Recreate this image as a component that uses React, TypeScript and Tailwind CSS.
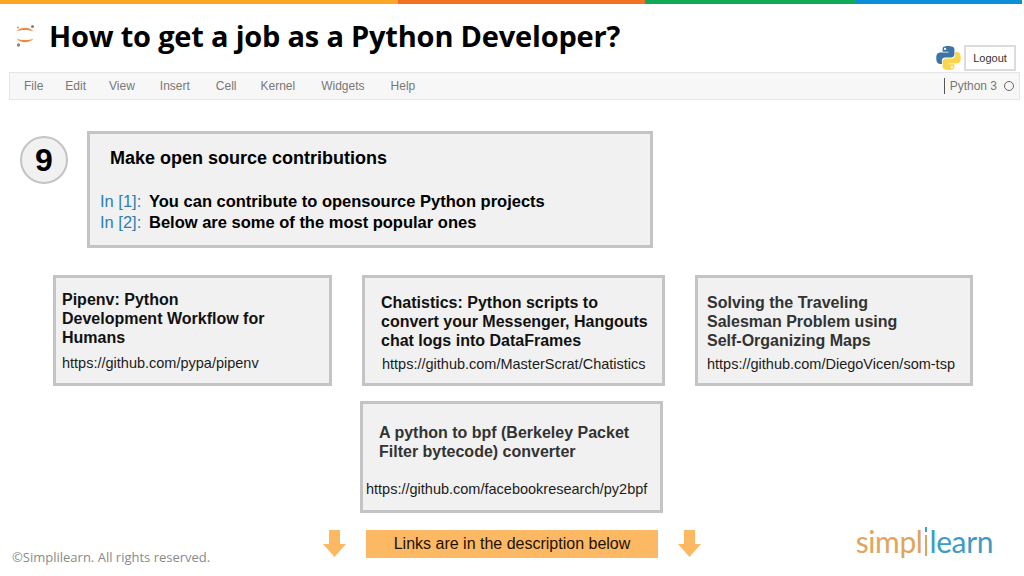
import React from 'react';

const menu = ['File', 'Edit', 'View', 'Insert', 'Cell', 'Kernel', 'Widgets', 'Help'];
const menuGaps = ['w-[22px]', 'w-[23px]', 'w-[25px]', 'w-[26px]', 'w-[24px]', 'w-[26px]', 'w-[26px]', 'w-[0px]'];

const JupyterMark = () => (
  <svg width="24" height="28" viewBox="0 0 24 28" className="shrink-0">
    <path d="M3.5 10.5C7 5.5 17 5.5 20.5 10.5C16.5 8.5 7.5 8.5 3.5 10.5Z" fill="#f08a3c" />
    <path d="M3.5 17.5C7 22.5 17 22.5 20.5 17.5C16.5 19.5 7.5 19.5 3.5 17.5Z" fill="#f08a3c" />
    <circle cx="19.5" cy="5.5" r="1.5" fill="#7a7f85" />
    <circle cx="5" cy="6.5" r="1" fill="#9a9ea3" />
    <circle cx="5.5" cy="24" r="1.7" fill="#83878c" />
  </svg>
);

const PythonMark = () => (
  <svg width="25" height="26" viewBox="0 0 110 110" className="shrink-0">
    <path
      d="M54 2C27 2 29 14 29 14V27H55V31H18S1 29 1 55 16 81 16 81H26V68S25 53 41 53H67S81 53 81 39V16S83 2 54 2ZM40 10A5 5 0 1 1 40 20 5 5 0 0 1 40 10Z"
      fill="#3c74a6"
    />
    <path
      d="M56 108C83 108 81 96 81 96V83H55V79H92S109 81 109 55 94 29 94 29H84V42S85 57 69 57H43S29 57 29 71V94S27 108 56 108ZM70 100A5 5 0 1 1 70 90 5 5 0 0 1 70 100Z"
      fill="#fbd54a"
    />
  </svg>
);

const DownArrow = () => (
  <svg width="23" height="27" viewBox="0 0 23 27" className="shrink-0">
    <path d="M6 0H17V14H23L11.5 27L0 14H6Z" fill="#fdb863" />
  </svg>
);

const SimplilearnLogo = () => (
  <div className="relative flex items-baseline text-[30px] leading-none font-['Lato',sans-serif] font-normal tracking-[-0.4px]">
    <span className="text-[#e0a55c]">simpl</span>
    <span className="relative w-[5px] mx-[1px] self-stretch">
      <span className="absolute left-[1px] top-[1px] w-[2px] h-[5px] bg-[#3f9cc4]" />
      <span className="absolute left-[1px] top-[9px] w-[2px] h-[21px] bg-[#e0a55c]" />
    </span>
    <span className="text-[#3f9cc4]">learn</span>
  </div>
);

type CardProps = {
  title: string[];
  url: string;
  className: string;
  titleClass: string;
  urlClass: string;
};

const Card = ({ title, url, className, titleClass, urlClass }: CardProps) => (
  <div className={`bg-[#f1f1f1] border-[3px] border-[#c4c4c4] ${className}`}>
    <div className={`font-bold text-[16px] leading-[19px] ${titleClass}`}>
      {title.map((line) => (
        <div key={line} className="whitespace-nowrap">{line}</div>
      ))}
    </div>
    <div className={`text-[14.5px] leading-[18px] whitespace-nowrap text-[#1c1c1c] ${urlClass}`}>{url}</div>
  </div>
);

export default function App() {
  return (
    <div className="w-[1024px] h-[576px] overflow-hidden bg-white flex flex-col font-['Liberation_Sans',Arial,sans-serif] text-black">
      <div className="flex h-1 shrink-0">
        <div className="w-[398px] bg-[#fba625]" />
        <div className="w-[247px] bg-[#f37029]" />
        <div className="w-[211px] bg-[#11a956]" />
        <div className="w-[166px] bg-[#0b8fd6]" />
      </div>

      <div className="h-[68px] shrink-0 flex pl-[13px] pr-[8px]">
        <div className="flex items-center h-[68px] pb-[6px]">
          <JupyterMark />
          <h1 className="ml-[12px] text-[29px] font-bold leading-none whitespace-nowrap font-['Open_Sans',sans-serif] tracking-[-0.2px]">
            How to get a job as a Python Developer?
          </h1>
        </div>
        <div className="ml-auto self-end flex items-center gap-[3px] mb-[1px]">
          <PythonMark />
          <div className="w-[52px] h-[26px] border-2 border-[#dcdcdc] flex items-center justify-center text-[11px] text-[#333]">
            Logout
          </div>
        </div>
      </div>

      <div className="mx-[9px] w-[1011px] h-[28px] shrink-0 bg-[#f7f7f7] border border-[#e6e6e6] flex items-center pl-[14px] pr-[5px] text-[12px] text-[#777]">
        {menu.map((m, i) => (
          <React.Fragment key={m}>
            <span>{m}</span>
            <span className={menuGaps[i]} />
          </React.Fragment>
        ))}
        <div className="ml-auto flex items-center">
          <span className="w-px h-[16px] bg-[#555] mr-[5px]" />
          <span>Python 3</span>
          <span className="ml-[7px] w-[10px] h-[10px] rounded-full border-[1.5px] border-[#666]" />
        </div>
      </div>

      <div className="flex mt-[31px] pl-[20px] shrink-0">
        <div className="mt-[5px] w-[48px] h-[48px] rounded-full bg-[#f1f1f1] border-2 border-[#c4c4c4] flex items-center justify-center text-[32px] font-bold leading-none">
          9
        </div>
        <div className="ml-[19px] w-[566px] h-[117px] bg-[#f1f1f1] border-[3px] border-[#c4c4c4] flex flex-col">
          <div className="ml-[20px] mt-[13px] text-[18px] font-bold leading-[22px]">Make open source contributions</div>
          <div className="ml-[10px] mt-[22px] text-[16.5px] leading-[21px]">
            <div className="flex">
              <span className="text-[#2f7fb0] w-[49px]">In [1]:</span>
              <span className="font-bold">You can contribute to opensource Python projects</span>
            </div>
            <div className="flex">
              <span className="text-[#2f7fb0] w-[49px]">In [2]:</span>
              <span className="font-bold">Below are some of the most popular ones</span>
            </div>
          </div>
        </div>
      </div>

      <div className="flex mt-[27px] pl-[53px] gap-[30px] shrink-0">
        <Card
          title={['Pipenv: Python', 'Development Workflow for', 'Humans']}
          url="https://github.com/pypa/pipenv"
          className="w-[279px] h-[111px] pl-[6px] pt-[12px]"
          titleClass="text-[#111]"
          urlClass="mt-[7px]"
        />
        <Card
          title={['Chatistics: Python scripts to', 'convert your Messenger, Hangouts', 'chat logs into DataFrames']}
          url="https://github.com/MasterScrat/Chatistics"
          className="w-[303px] h-[111px] pl-[16px] pt-[15px]"
          titleClass="text-[#111]"
          urlClass="mt-[5px] ml-[1px]"
        />
        <Card
          title={['Solving the Traveling', 'Salesman Problem using', 'Self-Organizing Maps']}
          url="https://github.com/DiegoVicen/som-tsp"
          className="w-[278px] h-[111px] pl-[9px] pt-[15px]"
          titleClass="text-[#333]"
          urlClass="mt-[5px]"
        />
      </div>

      <div className="flex mt-[15px] pl-[360px] shrink-0">
        <Card
          title={['A python to bpf (Berkeley Packet', 'Filter bytecode) converter']}
          url="https://github.com/facebookresearch/py2bpf"
          className="w-[303px] h-[112px] pl-[16px] pt-[19px]"
          titleClass="text-[#333]"
          urlClass="mt-[19px] -ml-[13px]"
        />
      </div>

      <div className="flex flex-1 pl-[12px] pr-[31px]">
        <div className="w-[311px] flex items-end pb-[9px] text-[13px] text-[#8a8a8a] font-['Open_Sans',sans-serif]">
          ©Simplilearn. All rights reserved.
        </div>
        <div className="flex items-start mt-[17px] gap-[20px]">
          <DownArrow />
          <div className="w-[292px] h-[28px] bg-[#fdb863] flex items-center justify-center text-[16px] text-[#1c1208]">
            Links are in the description below
          </div>
          <DownArrow />
        </div>
        <div className="ml-auto mt-[13px]">
          <SimplilearnLogo />
        </div>
      </div>
    </div>
  );
}
